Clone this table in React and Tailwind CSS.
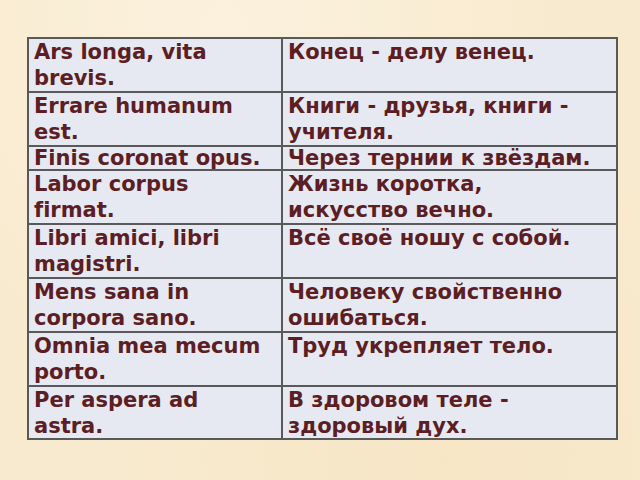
import React from 'react';

const rows = [
    { h: 'h-[52px]', la: ['Ars longa, vita', 'brevis.'], ru: ['Конец - делу венец.'] },
    { h: 'h-[52px]', la: ['Errare humanum', 'est.'], ru: ['Книги - друзья, книги -', 'учителя.'] },
    { h: 'h-[22px]', la: ['Finis coronat opus.'], ru: ['Через тернии к звёздам.'], tight: true },
    { h: 'h-[52px]', la: ['Labor corpus', 'firmat.'], ru: ['Жизнь коротка,', 'искусство вечно.'] },
    { h: 'h-[52px]', la: ['Libri amici, libri', 'magistri.'], ru: ['Всё своё ношу с собой.'] },
    { h: 'h-[52px]', la: ['Mens sana in', 'corpora sano.'], ru: ['Человеку свойственно', 'ошибаться.'] },
    { h: 'h-[52px]', la: ['Omnia mea mecum', 'porto.'], ru: ['Труд укрепляет тело.'] },
    { h: 'h-[51px]', la: ['Per aspera ad', 'astra.'], ru: ['В здоровом теле -', 'здоровый дух.'] },
];

const Cell = ({ lines, h, tight }) => (
    <div className={`${h} bg-[#e6e8f2] pl-[5px] whitespace-nowrap overflow-visible ${tight ? 'leading-[22px]' : 'leading-[26px]'}`}>
        {lines.map((l, i) => (
            <div key={i}>{l}</div>
        ))}
    </div>
);

export default function App() {
    return (
        <div className="w-[640px] h-[480px] overflow-hidden bg-[#f8eace] bg-[radial-gradient(ellipse_at_35%_5%,#fbf1dd_0%,transparent_60%),radial-gradient(ellipse_at_70%_95%,#f6e6c6_0%,transparent_50%)] pt-[37px] pl-[27px]">
            <div
                className="w-[591px] grid grid-cols-[252px_333px] gap-[2px] p-[2px] bg-[#595959] text-[21px] font-bold text-[#5c1e23] [font-variant-ligatures:none]"
                style={{ fontFamily: '"DejaVu Sans", sans-serif' }}
            >
                {rows.map((r, i) => (
                    <React.Fragment key={i}>
                        <Cell lines={r.la} h={r.h} tight={r.tight} />
                        <Cell lines={r.ru} h={r.h} tight={r.tight} />
                    </React.Fragment>
                ))}
            </div>
        </div>
    );
}
